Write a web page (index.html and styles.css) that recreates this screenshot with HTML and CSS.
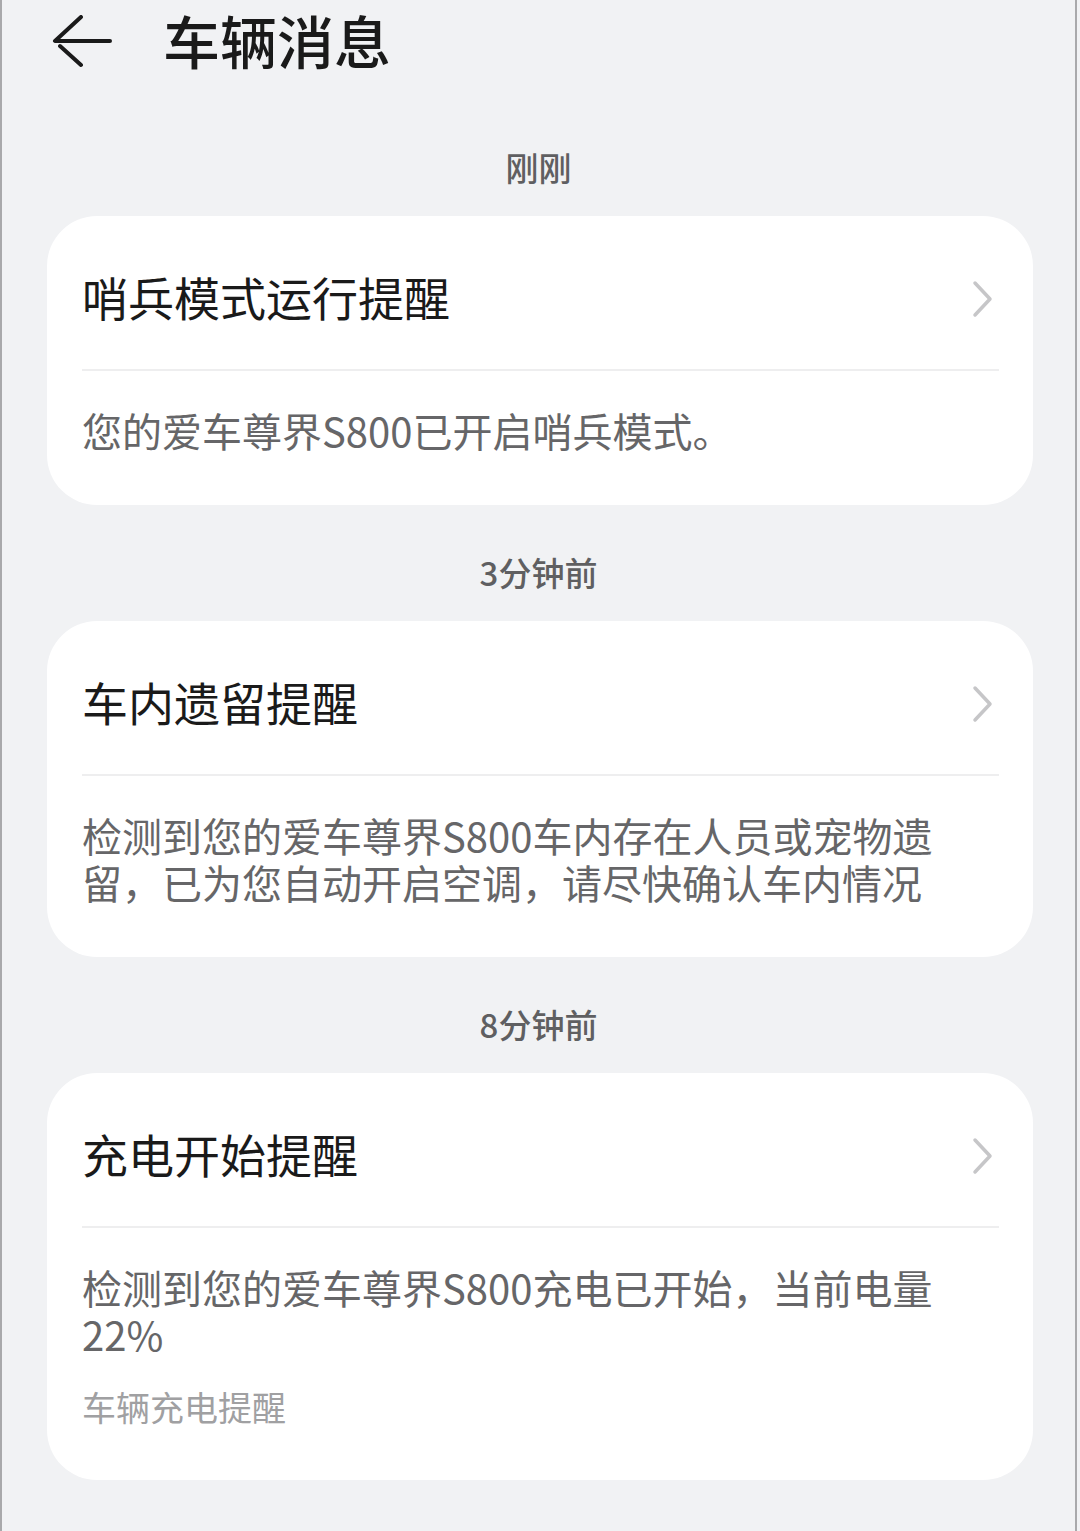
FILE: index.html
```html
<!DOCTYPE html>
<html>
<head>
  <title>车辆消息</title>
  <meta charset="utf-8">
  <link rel="stylesheet" href="styles.css">
</head>
<body>
  <div class="screen">
    <div class="header">
      <svg class="back" width="64" height="56" viewBox="0 0 64 56">
        <path d="M60 26 H6 M31 2 L5 26 M10 31 L31 50" />
      </svg>
      <h1>车辆消息</h1>
    </div>

    <div class="list">
      <div class="section">
        <p class="time">刚刚</p>
        <div class="card">
          <div class="card-head">
            <span class="card-title">哨兵模式运行提醒</span>
            <svg class="chevron" width="24" height="40" viewBox="0 0 24 40">
              <path d="M4 4 L19 20 L4 36" />
            </svg>
          </div>
          <div class="card-body">
            <p class="msg">您的爱车尊界S800已开启哨兵模式。</p>
          </div>
        </div>
      </div>

      <div class="section">
        <p class="time">3分钟前</p>
        <div class="card">
          <div class="card-head">
            <span class="card-title">车内遗留提醒</span>
            <svg class="chevron" width="24" height="40" viewBox="0 0 24 40">
              <path d="M4 4 L19 20 L4 36" />
            </svg>
          </div>
          <div class="card-body">
            <p class="msg">检测到您的爱车尊界S800车内存在人员或宠物遗留，已为您自动开启空调，请尽快确认车内情况</p>
          </div>
        </div>
      </div>

      <div class="section">
        <p class="time">8分钟前</p>
        <div class="card">
          <div class="card-head">
            <span class="card-title">充电开始提醒</span>
            <svg class="chevron" width="24" height="40" viewBox="0 0 24 40">
              <path d="M4 4 L19 20 L4 36" />
            </svg>
          </div>
          <div class="card-body">
            <p class="msg">检测到您的爱车尊界S800充电已开始，当前电量22%</p>
            <p class="source">车辆充电提醒</p>
          </div>
        </div>
      </div>
    </div>
  </div>
</body>
</html>
```

FILE: styles.css
```css
html, body {
  margin: 0;
  padding: 0;
}
body {
  background-color: #f1f2f4;
  font-family: "Noto Sans CJK SC", "Noto Sans", sans-serif;
}
.screen {
  box-sizing: border-box;
  min-height: 1531px;
  margin-right: 3px;
  border-left: 2px solid #a9a9ab;
  border-right: 2px solid #a9a9ab;
}
.header {
  display: flex;
  align-items: center;
  height: 86px;
  padding-left: 48px;
}
.back {
  fill: none;
  stroke: #1a1a1a;
  stroke-width: 4;
  stroke-linecap: round;
  stroke-linejoin: round;
}
h1 {
  margin: 0 0 8px 49px;
  font-size: 57px;
  line-height: 1;
  font-weight: 500;
  color: #1a1a1a;
}
.list {
  padding-top: 14px;
}
.section {
  padding-top: 50px;
}
.time {
  margin: 0 0 26px;
  height: 40px;
  line-height: 34px;
  text-align: center;
  font-size: 33px;
  font-weight: 500;
  color: #5f5f61;
}
.card {
  margin: 0 42px 0 45px;
  padding: 0 34px 0 35px;
  background-color: #fff;
  border-radius: 50px;
}
.card-head {
  display: flex;
  align-items: center;
  justify-content: space-between;
  padding: 57px 0 50px;
  border-bottom: 2px solid #eeeeef;
}
.card-title {
  font-size: 46px;
  line-height: 46px;
  font-weight: 400;
  color: #1a1a1a;
}
.chevron {
  margin: 6px 4px 0 0;
  fill: none;
  stroke: #c6c6c8;
  stroke-width: 3.5;
  stroke-linecap: round;
  stroke-linejoin: round;
}
.card-body {
  padding: 36px 0 51px;
}
.msg {
  margin: 0;
  max-width: 880px;
  font-size: 40px;
  line-height: 47px;
  color: #666668;
}
.source {
  margin: 27px 0 0;
  font-size: 34px;
  line-height: 44px;
  color: #a0a0a2;
}
```
